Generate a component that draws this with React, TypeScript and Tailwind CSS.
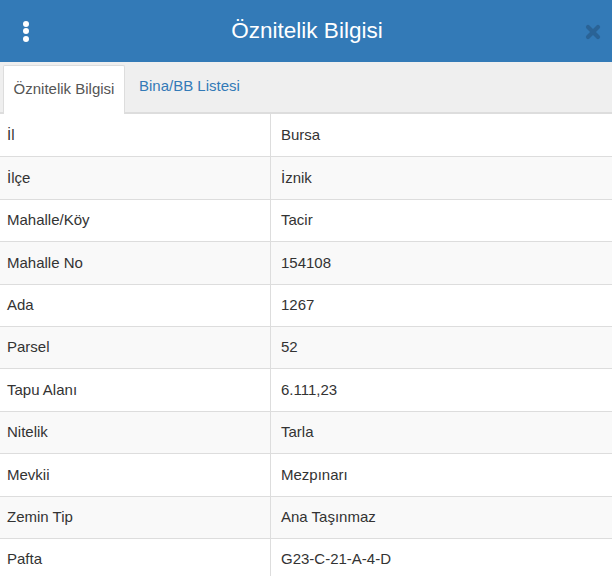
const rows: [string, string][] = [
  ['İl', 'Bursa'],
  ['İlçe', 'İznik'],
  ['Mahalle/Köy', 'Tacir'],
  ['Mahalle No', '154108'],
  ['Ada', '1267'],
  ['Parsel', '52'],
  ['Tapu Alanı', '6.111,23'],
  ['Nitelik', 'Tarla'],
  ['Mevkii', 'Mezpınarı'],
  ['Zemin Tip', 'Ana Taşınmaz'],
  ['Pafta', 'G23-C-21-A-4-D'],
];

export default function App() {
  return (
    <div
      className="w-[612px] h-[576px] overflow-hidden bg-white text-[#333]"
      style={{ fontFamily: '"Liberation Sans", Arial, sans-serif' }}
    >
      {/* header */}
      <div className="h-[62px] bg-[#337ab7] flex items-center justify-between px-[21px]">
        <div className="flex flex-col gap-[1.5px] items-center w-[10px]">
          <span className="block w-[6px] h-[6px] rounded-full bg-white" />
          <span className="block w-[6px] h-[6px] rounded-full bg-white" />
          <span className="block w-[6px] h-[6px] rounded-full bg-white" />
        </div>
        <h1 className="text-white text-[22.5px] leading-none pr-[2px]">Öznitelik Bilgisi</h1>
        <svg width="16" height="16" viewBox="0 0 16 16" className="mr-[-10px] mt-[1px]">
          <path d="M3 3 L13 13 M13 3 L3 13" stroke="#2a6396" strokeWidth="4.2" strokeLinecap="round" />
        </svg>
      </div>

      {/* tabs */}
      <div className="h-[52px] bg-[#efefef] border-b-2 border-[#dddddd] flex items-end pl-[3px]">
        <div className="h-[49px] w-[122px] bg-white border border-b-0 border-[#dddddd] rounded-t-[2px] mb-[-2px] flex items-center justify-center text-[15px] text-[#555] pb-[2px]">
          Öznitelik Bilgisi
        </div>
        <div className="h-[49px] flex items-center pl-[14px] text-[15px] text-[#337ab7] pb-[2px]">
          Bina/BB Listesi
        </div>
      </div>

      {/* table */}
      <div className="flex flex-col">
        {rows.map(([label, value], i) => (
          <div
            key={label}
            className={`flex h-[42.4px] text-[15px] ${i > 0 ? 'border-t border-[#dddddd]' : ''} ${i % 2 === 1 ? 'bg-[#f9f9f9]' : 'bg-white'}`}
          >
            <div className="w-[271px] border-r border-[#dddddd] flex items-center pl-[7px]">{label}</div>
            <div className="flex-1 flex items-center pl-[10px]">{value}</div>
          </div>
        ))}
      </div>
    </div>
  );
}
